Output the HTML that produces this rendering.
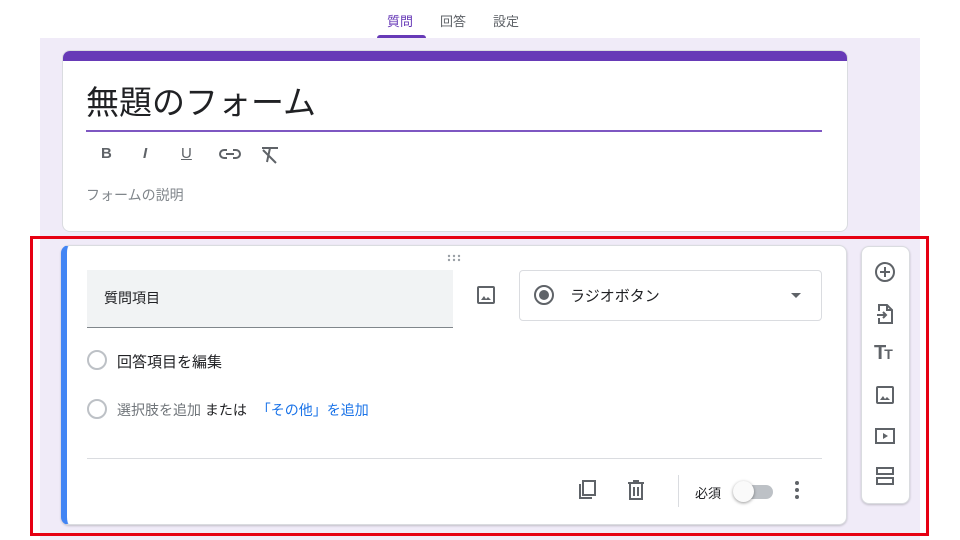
<!DOCTYPE html>
<html><head><meta charset="utf-8"><style>
*{margin:0;padding:0;box-sizing:border-box}
body{width:960px;height:540px;background:#fff;position:relative;overflow:hidden;font-family:"Liberation Sans","Noto Sans CJK JP",sans-serif;color:#202124}
.a{position:absolute}
.tab{font-size:13px;top:11px;color:#5f6368}
.card{background:#fff;border-radius:8px;border:1px solid #dadce0}
svg{position:absolute}
</style></head><body>
<div class="a tab" style="left:387px;color:#673ab7">質問</div>
<div class="a tab" style="left:440px">回答</div>
<div class="a tab" style="left:493px">設定</div>
<div class="a" style="left:377px;top:35px;width:49px;height:3px;background:#673ab7;border-radius:3px 3px 0 0"></div>
<div class="a" style="left:40px;top:38px;width:880px;height:502px;background:#f0ebf8"></div>

<div class="a card" style="left:62px;top:50px;width:786px;height:182px;overflow:hidden">
 <div style="height:10px;background:#673ab7"></div>
</div>
<div class="a" style="left:86px;top:82px;font-size:33px;line-height:42px;color:#202124">無題のフォーム</div>
<div class="a" style="left:86px;top:130px;width:736px;height:2px;background:#7e57c2"></div>
<div class="a" style="left:101px;top:145px;font-size:15px;font-weight:bold;color:#5f6368">B</div>
<div class="a" style="left:143px;top:145px;font-size:15px;font-style:italic;font-weight:bold;color:#5f6368">I</div>
<div class="a" style="left:181px;top:145px;font-size:15px;text-decoration:underline;color:#5f6368">U</div>
<svg style="left:219px;top:147px" width="22" height="14" viewBox="0 0 22 14"><path d="M8 3H5a4 4 0 0 0 0 8h3M14 3h3a4 4 0 0 1 0 8h-3M7 7h8" stroke="#5f6368" stroke-width="2" fill="none"/></svg>
<svg style="left:260px;top:146px" width="20" height="18" viewBox="0 0 20 18"><path d="M2 2h16M10 2l-3 14M3 4l13 13" stroke="#5f6368" stroke-width="2" fill="none"/></svg>
<div class="a" style="left:86px;top:185px;font-size:14px;color:#80868b">フォームの説明</div>

<div class="a" style="left:30px;top:236px;width:899px;height:300px;border:3px solid #e60012"></div>

<div class="a card" style="left:61px;top:245px;width:786px;height:280px;border-left:6px solid #4285f4;box-shadow:0 1px 2px rgba(0,0,0,.2)"></div>
<svg style="left:447px;top:254px" width="16" height="8" viewBox="0 0 16 8"><g fill="#9aa0a6"><circle cx="2" cy="2" r="1.2"/><circle cx="7" cy="2" r="1.2"/><circle cx="12" cy="2" r="1.2"/><circle cx="2" cy="6" r="1.2"/><circle cx="7" cy="6" r="1.2"/><circle cx="12" cy="6" r="1.2"/></g></svg>
<div class="a" style="left:87px;top:270px;width:366px;height:58px;background:#f1f3f4;border-bottom:1px solid #80868b"></div>
<div class="a" style="left:104px;top:288px;font-size:14px">質問項目</div>
<svg style="left:476px;top:285px" width="20" height="20" viewBox="0 0 20 20"><rect x="2" y="2" width="16" height="16" rx="1" stroke="#5f6368" stroke-width="2" fill="none"/><path d="M5 15l3-4 2 3 2-2 3 3z" fill="#5f6368"/></svg>
<div class="a" style="left:519px;top:270px;width:303px;height:51px;border:1px solid #dadce0;border-radius:4px"></div>
<div class="a" style="left:534px;top:285px;width:20px;height:20px;border:2px solid #5f6368;border-radius:50%"></div>
<div class="a" style="left:539px;top:290px;width:10px;height:10px;background:#5f6368;border-radius:50%"></div>
<div class="a" style="left:570px;top:285px;font-size:15px;color:#202124">ラジオボタン</div>
<div class="a" style="left:791px;top:293px;border:5px solid transparent;border-top-color:#5f6368;border-bottom:0"></div>
<div class="a" style="left:87px;top:350px;width:20px;height:20px;border:2px solid #bdc1c6;border-radius:50%"></div>
<div class="a" style="left:117px;top:351px;font-size:15px">回答項目を編集</div>
<div class="a" style="left:87px;top:399px;width:20px;height:20px;border:2px solid #bdc1c6;border-radius:50%"></div>
<div class="a" style="left:117px;top:400px;font-size:14px;color:#70757a">選択肢を追加 <span style="color:#202124">または</span> <span style="color:#1a73e8;margin-left:6px">「その他」を追加</span></div>
<div class="a" style="left:87px;top:458px;width:735px;height:1px;background:#dadce0"></div>
<svg style="left:576px;top:479px" width="22" height="22" viewBox="0 0 22 22"><path d="M4 5v14h12" stroke="#5f6368" stroke-width="2" fill="none"/><rect x="7" y="2" width="12" height="14" stroke="#5f6368" stroke-width="2" fill="none"/></svg>
<svg style="left:626px;top:479px" width="20" height="22" viewBox="0 0 20 22"><path d="M2 4h16M7 2h6M4 5v15h12V5M8 8v9M12 8v9" stroke="#5f6368" stroke-width="2" fill="none"/></svg>
<div class="a" style="left:678px;top:475px;width:1px;height:32px;background:#dadce0"></div>
<div class="a" style="left:695px;top:483px;font-size:13px;color:#202124">必須</div>
<div class="a" style="left:737px;top:485px;width:36px;height:14px;background:#bdc1c6;border-radius:7px"></div>
<div class="a" style="left:733px;top:481px;width:21px;height:21px;background:#fafafa;border-radius:50%;box-shadow:0 1px 3px rgba(0,0,0,.4)"></div>
<svg style="left:792px;top:480px" width="10" height="20" viewBox="0 0 10 20"><circle cx="5" cy="3" r="2" fill="#5f6368"/><circle cx="5" cy="10" r="2" fill="#5f6368"/><circle cx="5" cy="17" r="2" fill="#5f6368"/></svg>

<div class="a card" style="left:861px;top:246px;width:49px;height:258px;box-shadow:0 1px 2px rgba(0,0,0,.2)"></div>
<svg style="left:874px;top:261px" width="22" height="22" viewBox="0 0 22 22"><circle cx="11" cy="11" r="9" stroke="#5f6368" stroke-width="2" fill="none"/><path d="M11 6v10M6 11h10" stroke="#5f6368" stroke-width="2"/></svg>
<svg style="left:875px;top:303px" width="20" height="22" viewBox="0 0 20 22"><path d="M4 8V2h8l5 5v13H4v-5M12 2v5h5M2 12h9M8 9l3 3-3 3" stroke="#5f6368" stroke-width="2" fill="none"/></svg>
<div class="a" style="left:874px;top:342px;font-size:20px;font-weight:bold;color:#5f6368;letter-spacing:-2px">T<span style="font-size:14px">T</span></div>
<svg style="left:875px;top:385px" width="20" height="20" viewBox="0 0 20 20"><rect x="2" y="2" width="16" height="16" rx="1" stroke="#5f6368" stroke-width="2" fill="none"/><path d="M5 15l3-4 2 3 2-2 3 3z" fill="#5f6368"/></svg>
<svg style="left:874px;top:427px" width="22" height="18" viewBox="0 0 22 18"><rect x="2" y="2" width="18" height="14" stroke="#5f6368" stroke-width="2" fill="none"/><path d="M9 6v6l5-3z" fill="#5f6368"/></svg>
<svg style="left:875px;top:466px" width="20" height="20" viewBox="0 0 20 20"><rect x="2" y="2" width="16" height="6" stroke="#5f6368" stroke-width="2" fill="none"/><rect x="2" y="12" width="16" height="6" stroke="#5f6368" stroke-width="2" fill="none"/></svg>
</body></html>
